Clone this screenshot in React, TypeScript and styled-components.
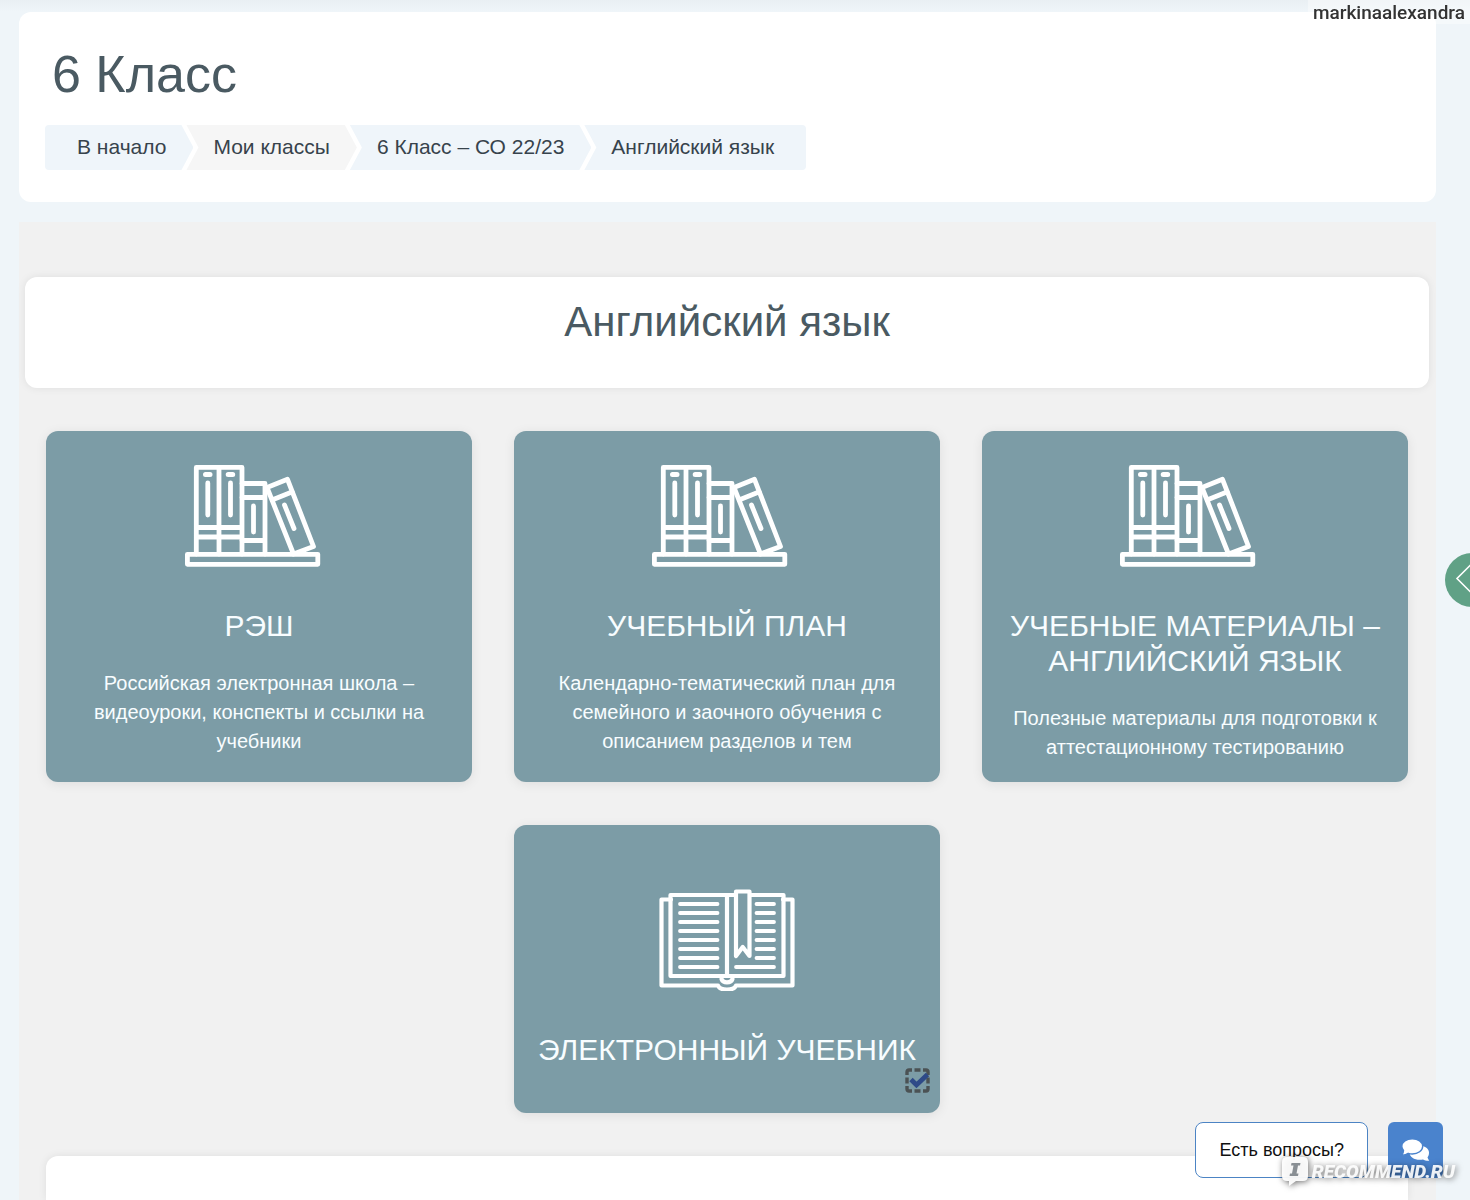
import React from "react";
import styled, { createGlobalStyle, css } from "styled-components";

const GlobalStyle = createGlobalStyle`
  *, *::before, *::after { box-sizing: border-box; }
  body {
    margin: 0;
    background: #eff5f9;
    font-family: "Liberation Sans", Arial, Helvetica, sans-serif;
    color: #37474f;
  }
  h1, h2, h3, p, ol { margin: 0; padding: 0; font-weight: 400; }
`;

const Page = styled.div`
  display: flex;
  flex-direction: column;
  gap: 20px;
  min-height: 100vh;
  padding: 12px 34px 0 19px;
  background: linear-gradient(#e9eff3, #eff5f9 12px);
`;

const PageHeader = styled.header`
  padding: 32px 26px;
  border-radius: 12px;
  background: #fff;
`;

const PageTitle = styled.h1`
  margin-bottom: 21px;
  padding-left: 7px;
  font-size: 52px;
  line-height: 60px;
  color: #4a5a62;
`;

const Trail = styled.ol`
  display: flex;
  width: fit-content;
  overflow: hidden;
  border-radius: 4px;
  list-style: none;
`;

const arrow = "calc(100% - 12px) 0, 100% 50%, calc(100% - 12px) 100%";

const Crumb = styled.li<{ $muted?: boolean }>`
  background: ${(p) => (p.$muted ? "#f6f6f6" : "#eff5fa")};
  padding: 0 27px 2px;
  clip-path: polygon(0 0, ${arrow}, 0 100%, 12px 50%);

  &:first-child {
    padding-left: 32px;
    clip-path: polygon(0 0, ${arrow}, 0 100%);
  }
  &:last-child {
    padding-right: 32px;
    clip-path: polygon(0 0, 100% 0, 100% 100%, 0 100%, 12px 50%);
  }
  & + & {
    margin-left: -7px;
  }
`;

const CrumbLink = styled.a`
  display: block;
  font-size: 21px;
  line-height: 43px;
  white-space: nowrap;
  color: #37434c;
  text-decoration: none;
`;

const Course = styled.main`
  display: flex;
  flex: 1;
  flex-direction: column;
  padding: 55px 7px 0 6px;
  background: #f1f1f1;
`;

const SectionHeader = styled.section`
  padding: 21px 24px 42px;
  border-radius: 12px;
  background: #fff;
  box-shadow: 0 0 8px rgba(0, 0, 0, 0.08);
`;

const SectionTitle = styled.h2`
  font-size: 42px;
  line-height: 48px;
  text-align: center;
  color: #4a5a62;
`;

const CardGrid = styled.div`
  display: flex;
  flex-wrap: wrap;
  justify-content: center;
  gap: 43px 42px;
  padding: 43px 21px;
`;

const CardCell = styled.article`
  position: relative;
  display: flex;
  flex: 0 0 calc((100% - 84px) / 3);
`;

const CardLink = styled.a<{ $roomy?: boolean }>`
  display: flex;
  flex: 1;
  flex-direction: column;
  align-items: center;
  min-width: 0;
  padding: 34px 22px 20px;
  border-radius: 12px;
  background: #7c9ca6;
  box-shadow: 0 2px 12px rgba(0, 0, 0, 0.08);
  color: #f8fdff;
  text-align: center;
  text-decoration: none;
  ${(p) =>
    p.$roomy &&
    css`
      padding: 64px 22px 46px;
    `}
`;

const CardTitle = styled.h3`
  margin-top: 41px;
  font-size: 30px;
  line-height: 35px;
`;

const CardText = styled.p`
  margin-top: 26px;
  font-size: 20px;
  line-height: 29px;
`;

const Completion = styled.label`
  position: absolute;
  right: 10px;
  bottom: 20px;
  display: grid;
  width: 25px;
  height: 25px;

  & > * {
    grid-area: 1 / 1;
    width: 100%;
    height: 100%;
    margin: 0;
  }
`;

const CompletionInput = styled.input`
  appearance: none;
`;

const NextPanel = styled.section`
  flex: 1;
  min-height: 44px;
  margin: 0 21px;
  border-radius: 12px 12px 0 0;
  background: #fff;
  box-shadow: 0 0 8px rgba(0, 0, 0, 0.08);
`;

const DrawerToggle = styled.button`
  position: fixed;
  top: 553px;
  right: -29px;
  width: 54px;
  height: 54px;
  padding: 0;
  border: 0;
  border-radius: 50%;
  background: #60a186;
`;

const ChatDock = styled.aside`
  position: fixed;
  right: 27px;
  bottom: 22px;
  display: flex;
  gap: 20px;
`;

const ChatPrompt = styled.button`
  padding: 0 23px;
  border: 1px solid #4c84c4;
  border-radius: 8px;
  background: #fff;
  font: 18px "Liberation Sans", Arial, sans-serif;
  color: #111;
`;

const ChatButton = styled.button`
  width: 55px;
  height: 56px;
  padding: 0;
  border: 0;
  border-radius: 6px;
  background: #4a83cd;
`;

const UserStamp = styled.div`
  position: fixed;
  top: 0;
  right: 0;
  padding: 2px 5px 0;
  background: rgba(255, 255, 255, 0.4);
  font: 500 19px/22px Roboto, sans-serif;
  color: #333;
`;

const SiteStamp = styled.div`
  position: fixed;
  right: 15px;
  bottom: 12px;
  display: flex;
  align-items: center;
  gap: 3px;
  filter: drop-shadow(1px 1px 3px rgba(0, 0, 0, 0.6));
  font: italic 900 19px/32px Roboto, sans-serif;
  color: rgba(255, 255, 255, 0.9);
  pointer-events: none;
`;

const BooksIcon = () => (
  <svg width="149" height="102" viewBox="0 0 149 102" fill="none" stroke="#fff" strokeWidth="4.8" strokeLinejoin="round" strokeLinecap="round" aria-hidden="true">
    <rect x="2.4" y="89.3" width="130.4" height="10" />
    <path d="M11.3 89V2.4H57V89M34 2.4V89M11.3 62.500H57M11.3 72H57" />
    <path d="M20.500 9.500h4.500M43.200 9.500h4.500" strokeWidth="5" />
    <path d="M22.800 18V50M45.500 18V50" />
    <path d="M57 18.500H80V89M57 32.500H80M57 75.500H80" />
    <path d="M68.500 41V67" />
    <path d="M82 22.500L102.500 14.300L128.500 81.500L108.500 89L82 22.500M87 35L107.500 26.800M99.500 40L109 63.500" />
  </svg>
);

const OpenBookIcon = () => (
  <svg width="136" height="102" viewBox="0 0 136 102" fill="none" stroke="#fff" strokeWidth="4.2" strokeLinejoin="round" strokeLinecap="round" aria-hidden="true">
    <path d="M12 10.500H2.500V96.500H59C61 102 75 102 77 96.500H133.500V10.500H124" />
    <path d="M75 6H11.500V87H124.500V6H92M68 6V87" />
    <path d="M62.500 90C64 94.500 72 94.500 73.500 90" />
    <path d="M77 2.500H90.500V67L83.700 58L77 67Z" />
    <path d="M21 15H58.500M21 24H58.500M21 33H58.500M21 42H58.500M21 51H58.500M21 60H58.500M21 69H58.500M21 78H58.500" strokeWidth="3.800" />
    <path d="M97.500 15H115M97.500 24H115M97.500 33H115M97.500 42H115M97.500 51H115M97.500 60H115M97.500 69H115M77 78H115" strokeWidth="3.800" />
  </svg>
);

const CompletionIcon = () => (
  <svg viewBox="0 0 25 25" fill="none" aria-hidden="true">
    <path d="M2 7V4Q2 2 4 2H7M9.500 2H15.500M18 2H21Q23 2 23 4V7M23 9.500V15.500M23 18V21Q23 23 21 23H18M15.500 23H9.500M7 23H4Q2 23 2 21V18M2 15.500V9.500" stroke="#4b5254" strokeWidth="3.400" />
    <path d="M6 11.500L11.500 17L22.500 6.500" stroke="#2e4a88" strokeWidth="4.800" />
  </svg>
);

const DrawerIcon = () => (
  <svg width="54" height="54" viewBox="0 0 54 54" fill="none" stroke="#fff" strokeWidth="1.600" aria-hidden="true">
    <path d="M27 10.500L12 25.500L27 40.500" />
  </svg>
);

const ChatIcon = () => (
  <svg width="55" height="56" viewBox="0 0 55 56" aria-hidden="true">
    <path d="M39.500 35.500C40 37 41 38 41.300 38.800C39 39 36.500 38.500 35 37.500C28 39 21.500 35.500 21.500 30.500C21.500 25.500 26 23.500 31 23.500C36.500 23.500 41 26.500 41 30.500C41 32.500 40.500 34 39.500 35.500Z" fill="#fff" />
    <path d="M15.500 28.500C14.500 27.200 13.800 25.800 13.800 24.300C13.800 20 18.500 16.800 24.300 16.800C30 16.800 34.700 20 34.700 24.300C34.700 28.700 30 32 24.300 32C22.800 32 21.500 31.800 20.200 31.400C18.500 32.700 16.300 33.300 13.800 33.200C14.800 31.800 15.500 30.200 15.500 28.500Z" fill="#fff" stroke="#4a83cd" strokeWidth="1.400" />
  </svg>
);

const StampIcon = () => (
  <svg width="28" height="32" viewBox="0 0 28 32" aria-hidden="true">
    <path d="M6 1H22Q27 1 27 6V20Q27 25 22 25H15L8 30V25H6Q1 25 1 20V6Q1 1 6 1Z" fill="#fff" fillOpacity="0.940" />
    <path d="M10.500 7H19.500L19 9.500H17L15.500 17.500H17.500L17 20H8.500L9 17.500H11L12.500 9.500H10Z" fill="#898f94" />
  </svg>
);

const crumbs = [
  { label: "В начало" },
  { label: "Мои классы", muted: true },
  { label: "6 Класс – СО 22/23" },
  { label: "Английский язык" },
];

const cards = [
  { title: "РЭШ", text: "Российская электронная школа – видеоуроки, конспекты и ссылки на учебники" },
  { title: "УЧЕБНЫЙ ПЛАН", text: "Календарно-тематический план для семейного и заочного обучения с описанием разделов и тем" },
  { title: "УЧЕБНЫЕ МАТЕРИАЛЫ – АНГЛИЙСКИЙ ЯЗЫК", text: "Полезные материалы для подготовки к аттестационному тестированию" },
];

export default function App() {
  return (
    <>
      <GlobalStyle />
      <Page>
        <PageHeader>
          <PageTitle>6 Класс</PageTitle>
          <nav aria-label="Навигация">
            <Trail>
              {crumbs.map((c) => (
                <Crumb key={c.label} $muted={c.muted}>
                  <CrumbLink href="#">{c.label}</CrumbLink>
                </Crumb>
              ))}
            </Trail>
          </nav>
        </PageHeader>
        <Course>
          <SectionHeader>
            <SectionTitle>Английский язык</SectionTitle>
          </SectionHeader>
          <CardGrid>
            {cards.map((c) => (
              <CardCell key={c.title}>
                <CardLink href="#">
                  <BooksIcon />
                  <CardTitle>{c.title}</CardTitle>
                  <CardText>{c.text}</CardText>
                </CardLink>
              </CardCell>
            ))}
            <CardCell>
              <CardLink href="#" $roomy>
                <OpenBookIcon />
                <CardTitle>ЭЛЕКТРОННЫЙ УЧЕБНИК</CardTitle>
              </CardLink>
              <Completion>
                <CompletionInput type="checkbox" defaultChecked aria-label="Выполнено" />
                <CompletionIcon />
              </Completion>
            </CardCell>
          </CardGrid>
          <NextPanel />
        </Course>
      </Page>
      <DrawerToggle type="button" aria-label="Открыть панель">
        <DrawerIcon />
      </DrawerToggle>
      <ChatDock>
        <ChatPrompt type="button">Есть вопросы?</ChatPrompt>
        <ChatButton type="button" aria-label="Чат">
          <ChatIcon />
        </ChatButton>
      </ChatDock>
      <UserStamp>markinaalexandra</UserStamp>
      <SiteStamp>
        <StampIcon />
        <span>RECOMMEND.RU</span>
      </SiteStamp>
    </>
  );
}
